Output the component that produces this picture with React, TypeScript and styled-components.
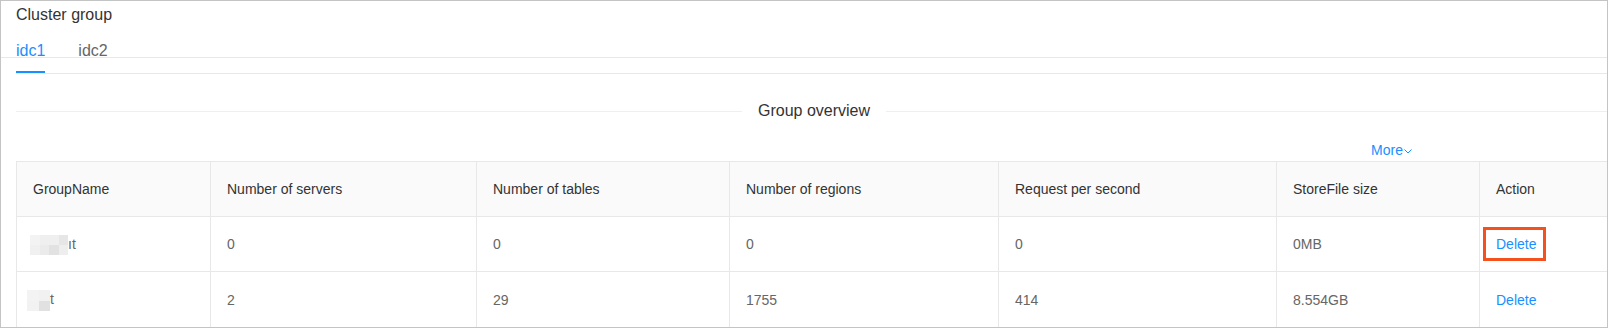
import styled, { createGlobalStyle } from 'styled-components';

const GlobalStyle = createGlobalStyle`
  html, body {
    margin: 0;
    padding: 0;
    background: #fff;
  }
  body {
    font-family: 'Liberation Sans', Arial, sans-serif;
    color: #333;
  }
`;

interface GroupRow {
  mosaic: { cols: number; cellWidth: number; cellHeight: number; offset: number; shades: string[] };
  tail: string;
  servers: string;
  tables: string;
  regions: string;
  requests: string;
  storeFile: string;
  highlighted?: boolean;
}

const columns = [
  { title: 'GroupName', width: 194 },
  { title: 'Number of servers', width: 266 },
  { title: 'Number of tables', width: 253 },
  { title: 'Number of regions', width: 269 },
  { title: 'Request per second', width: 278 },
  { title: 'StoreFile size', width: 203 },
  { title: 'Action', width: 133 },
];

const rows: GroupRow[] = [
  {
    mosaic: {
      cols: 4,
      cellWidth: 9.5,
      cellHeight: 10,
      offset: -3,
      shades: ['#f3f3f3', '#efefef', '#efefef', '#e6e6e6', '#f0f0f0', '#ebebeb', '#e2e2e2', '#eeeeee'],
    },
    tail: 'ıt',
    servers: '0',
    tables: '0',
    regions: '0',
    requests: '0',
    storeFile: '0MB',
    highlighted: true,
  },
  {
    mosaic: {
      cols: 2,
      cellWidth: 11.5,
      cellHeight: 10.5,
      offset: -6,
      shades: ['#f3f3f3', '#f1f1f1', '#f2f2f2', '#e1e1e1'],
    },
    tail: 't',
    servers: '2',
    tables: '29',
    regions: '1755',
    requests: '414',
    storeFile: '8.554GB',
  },
];

const App = () => {
  return (
    <>
      <GlobalStyle />
      <Window>
        <Content>
          <Title>Cluster group</Title>
          <TabNav>
            <Tab $active>idc1</Tab>
            <Tab>idc2</Tab>
          </TabNav>

          <Divider>
            <DividerText>Group overview</DividerText>
          </Divider>

          <Toolbar>
            <MoreLink>
              More
              <svg width='8' height='5' viewBox='0 0 8 5' fill='none'>
                <polyline points='0.5,0.5 4,4 7.5,0.5' stroke='#1890ff' strokeWidth='1' />
              </svg>
            </MoreLink>
          </Toolbar>

          <Table>
            <colgroup>
              {columns.map((col) => (
                <col key={col.title} style={{ width: col.width }} />
              ))}
            </colgroup>
            <thead>
              <tr>
                {columns.map((col) => (
                  <HeadCell key={col.title}>{col.title}</HeadCell>
                ))}
              </tr>
            </thead>
            <tbody>
              {rows.map((row, i) => (
                <tr key={i}>
                  <Cell>
                    <Mosaic
                      $cols={row.mosaic.cols}
                      $w={row.mosaic.cellWidth}
                      $h={row.mosaic.cellHeight}
                      $offset={row.mosaic.offset}
                    >
                      {row.mosaic.shades.map((shade, j) => (
                        <MosaicCell key={j} $shade={shade} />
                      ))}
                    </Mosaic>
                    {row.tail}
                  </Cell>
                  <Cell>{row.servers}</Cell>
                  <Cell>{row.tables}</Cell>
                  <Cell>{row.regions}</Cell>
                  <Cell>{row.requests}</Cell>
                  <Cell>{row.storeFile}</Cell>
                  <Cell>
                    <ActionLink $highlighted={row.highlighted}>Delete</ActionLink>
                  </Cell>
                </tr>
              ))}
            </tbody>
          </Table>
        </Content>
      </Window>
    </>
  );
};

const Window = styled.div`
  box-sizing: border-box;
  width: 1608px;
  height: 328px;
  border: 1px solid #c4c4c4;
  overflow: hidden;
  background: #fff;
`;

const Content = styled.div`
  width: 1596px;
  padding: 3px 0 0 15px;
`;

const Title = styled.div`
  font-size: 16px;
  line-height: 22px;
  color: #333;
`;

const TabNav = styled.div`
  position: relative;
  display: flex;
  gap: 33px;
  border-bottom: 1px solid #e8e8e8;

  &::before {
    content: '';
    position: absolute;
    top: 31px;
    left: -15px;
    right: 0;
    height: 1px;
    background: #e8e8e8;
  }
`;

const Tab = styled.div<{ $active?: boolean }>`
  padding: 14px 0 9px;
  font-size: 16px;
  line-height: 22px;
  color: ${({ $active }) => ($active ? '#1890ff' : '#666')};
  border-bottom: 2px solid ${({ $active }) => ($active ? '#1890ff' : 'transparent')};
`;

const Divider = styled.div`
  display: flex;
  align-items: center;
  margin-top: 26px;

  &::before,
  &::after {
    content: '';
    flex: 1;
    height: 1px;
    background: #efefef;
  }
`;

const DividerText = styled.span`
  padding: 0 16px;
  font-size: 16px;
  line-height: 22px;
  color: #333;
`;

const Toolbar = styled.div`
  display: flex;
  justify-content: flex-end;
  margin-top: 18px;
  padding-right: 200px;
  height: 21px;
`;

const MoreLink = styled.a`
  display: flex;
  align-items: center;
  gap: 1px;
  font-size: 14px;
  line-height: 21px;
  color: #1890ff;
  cursor: pointer;

  svg {
    margin-top: 2px;
  }
`;

const Table = styled.table`
  width: 1597px;
  table-layout: fixed;
  border-collapse: separate;
  border-spacing: 0;
  border-top: 1px solid #e8e8e8;
  border-left: 1px solid #e8e8e8;
  font-size: 14px;
`;

const HeadCell = styled.th`
  padding: 16px;
  line-height: 22px;
  text-align: left;
  font-weight: normal;
  color: #333;
  background: #fafafa;
  border-right: 1px solid #e8e8e8;
  border-bottom: 1px solid #e8e8e8;
  white-space: nowrap;
`;

const Cell = styled.td`
  padding: 16px;
  line-height: 22px;
  color: #666;
  border-right: 1px solid #e8e8e8;
  border-bottom: 1px solid #e8e8e8;
  white-space: nowrap;
`;

const Mosaic = styled.span<{ $cols: number; $w: number; $h: number; $offset: number }>`
  display: inline-grid;
  grid-template-columns: repeat(${({ $cols }) => $cols}, ${({ $w }) => $w}px);
  grid-auto-rows: ${({ $h }) => $h}px;
  margin-left: ${({ $offset }) => $offset}px;
  vertical-align: middle;
`;

const MosaicCell = styled.span<{ $shade: string }>`
  background: ${({ $shade }) => $shade};
`;

const ActionLink = styled.a<{ $highlighted?: boolean }>`
  position: relative;
  color: #1890ff;
  cursor: pointer;

  &::after {
    content: '';
    display: ${({ $highlighted }) => ($highlighted ? 'block' : 'none')};
    position: absolute;
    top: -9px;
    bottom: -9px;
    left: -13px;
    right: -10px;
    border: 3px solid #f4511e;
  }
`;

export default App;
